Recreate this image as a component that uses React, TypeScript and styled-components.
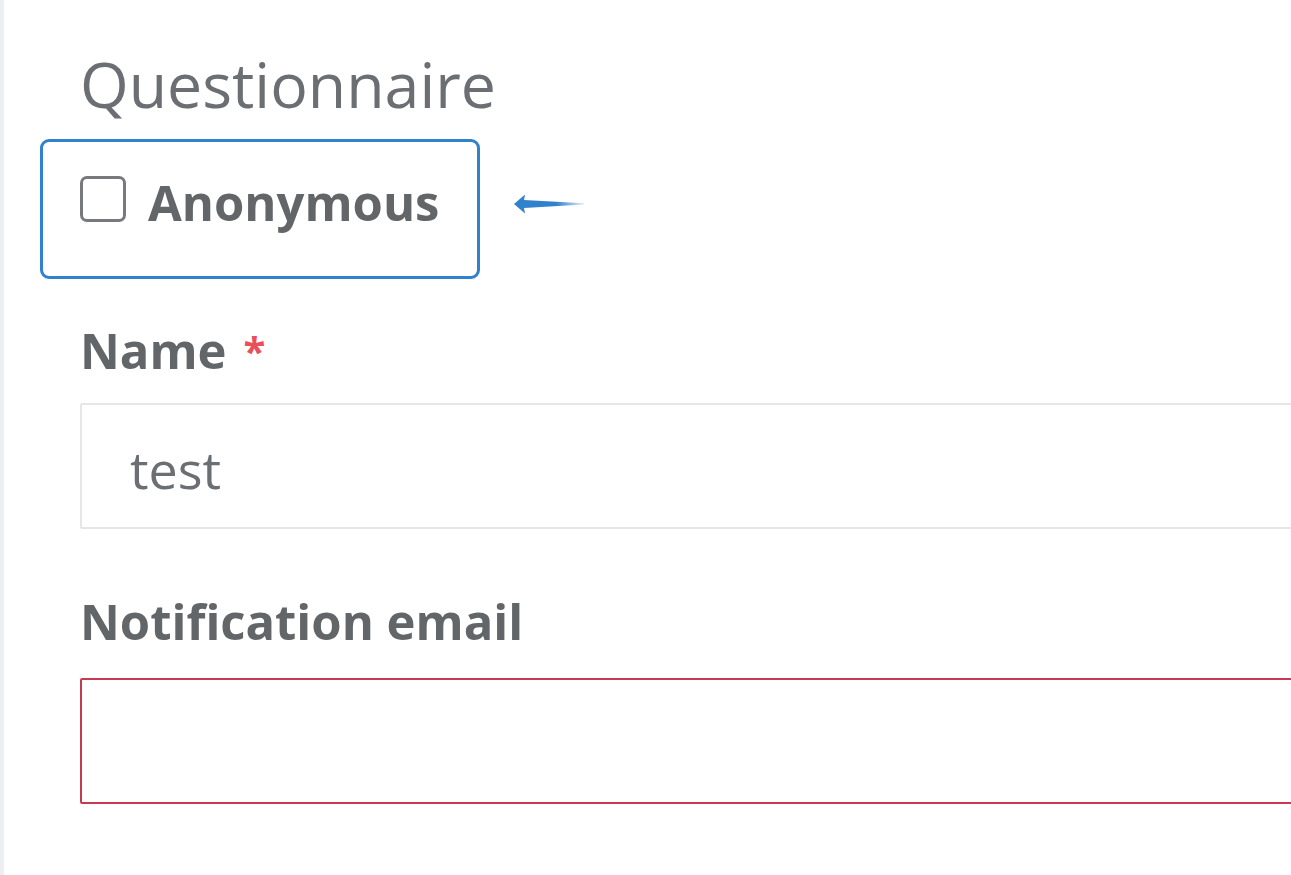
import styled, { createGlobalStyle } from "styled-components";

const GlobalStyle = createGlobalStyle`
  html, body {
    margin: 0;
    padding: 0;
    background: #ffffff;
    overflow: hidden;
  }
  body {
    font-family: "Open Sans", "Liberation Sans", sans-serif;
  }
`;

const Page = styled.div`
  min-height: 875px;
  box-sizing: border-box;
  border-left: 4px solid #eceef1;
  padding: 48px 0 0 76px;
  overflow: hidden;
`;

const Title = styled.h1`
  margin: 0;
  font-size: 62.6px;
  line-height: 72px;
  font-weight: 400;
  color: #6b6e72;
`;

const HighlightRow = styled.div`
  display: flex;
  align-items: center;
  gap: 33px;
  margin: 19px 0 0 -40px;
`;

const Highlight = styled.div`
  width: 440px;
  height: 140px;
  box-sizing: border-box;
  border: 3px solid #2f82cb;
  border-radius: 9px;
  padding: 30px 0 0 37px;
`;

const CheckLabel = styled.label`
  display: flex;
  align-items: center;
  gap: 22px;
  font-size: 49px;
  font-weight: 700;
  color: #636669;
  line-height: 60px;
`;

const Box = styled.span`
  width: 46px;
  height: 46px;
  flex: none;
  box-sizing: border-box;
  border: 3px solid #77797c;
  border-radius: 7px;
  background: #fff;
  margin-top: -6px;
`;

const Field = styled.div<{ $top: number; $gap: number }>`
  display: flex;
  flex-direction: column;
  gap: ${(p) => p.$gap}px;
  margin-top: ${(p) => p.$top}px;
`;

const Label = styled.div`
  display: flex;
  align-items: flex-start;
  font-size: 49px;
  font-weight: 700;
  line-height: 60px;
  color: #636669;
`;

const Star = styled.span`
  margin: 6px 0 0 17px;
  font-size: 40px;
  line-height: 50px;
  color: #e8505b;
`;

const Input = styled.div<{ $error?: boolean }>`
  width: 1400px;
  height: 126px;
  box-sizing: border-box;
  border: 2px solid ${(p) => (p.$error ? "#c93a52" : "#e4e6e8")};
  border-radius: 2px;
  padding: 5px 0 0 48px;
  display: flex;
  align-items: center;
  font-size: 52px;
  color: #6b6e72;
`;

const ArrowSvg = styled.svg`
  flex: none;
  margin-bottom: 10px;
`;

const Arrow = () => (
  <ArrowSvg width="72" height="20" viewBox="0 0 72 20">
    <defs>
      <linearGradient id="fade" x1="0" x2="1" y1="0" y2="0">
        <stop offset="0" stopColor="#2f82cb" />
        <stop offset="0.6" stopColor="#2f82cb" />
        <stop offset="1" stopColor="#2f82cb" stopOpacity="0.15" />
      </linearGradient>
    </defs>
    <path
      d="M1 10 L12 0.5 L11 6 L71 9.2 L71 10.6 L11 14 L12 19.5 Z"
      fill="url(#fade)"
    />
  </ArrowSvg>
);

export default function App() {
  return (
    <>
      <GlobalStyle />
      <Page>
        <Title>Questionnaire</Title>
        <HighlightRow>
          <Highlight>
            <CheckLabel>
              <Box />
              Anonymous
            </CheckLabel>
          </Highlight>
          <Arrow />
        </HighlightRow>
        <Field $top={41} $gap={23}>
          <Label>
            Name<Star>*</Star>
          </Label>
          <Input>test</Input>
        </Field>
        <Field $top={62} $gap={27}>
          <Label>Notification email</Label>
          <Input $error />
        </Field>
      </Page>
    </>
  );
}
